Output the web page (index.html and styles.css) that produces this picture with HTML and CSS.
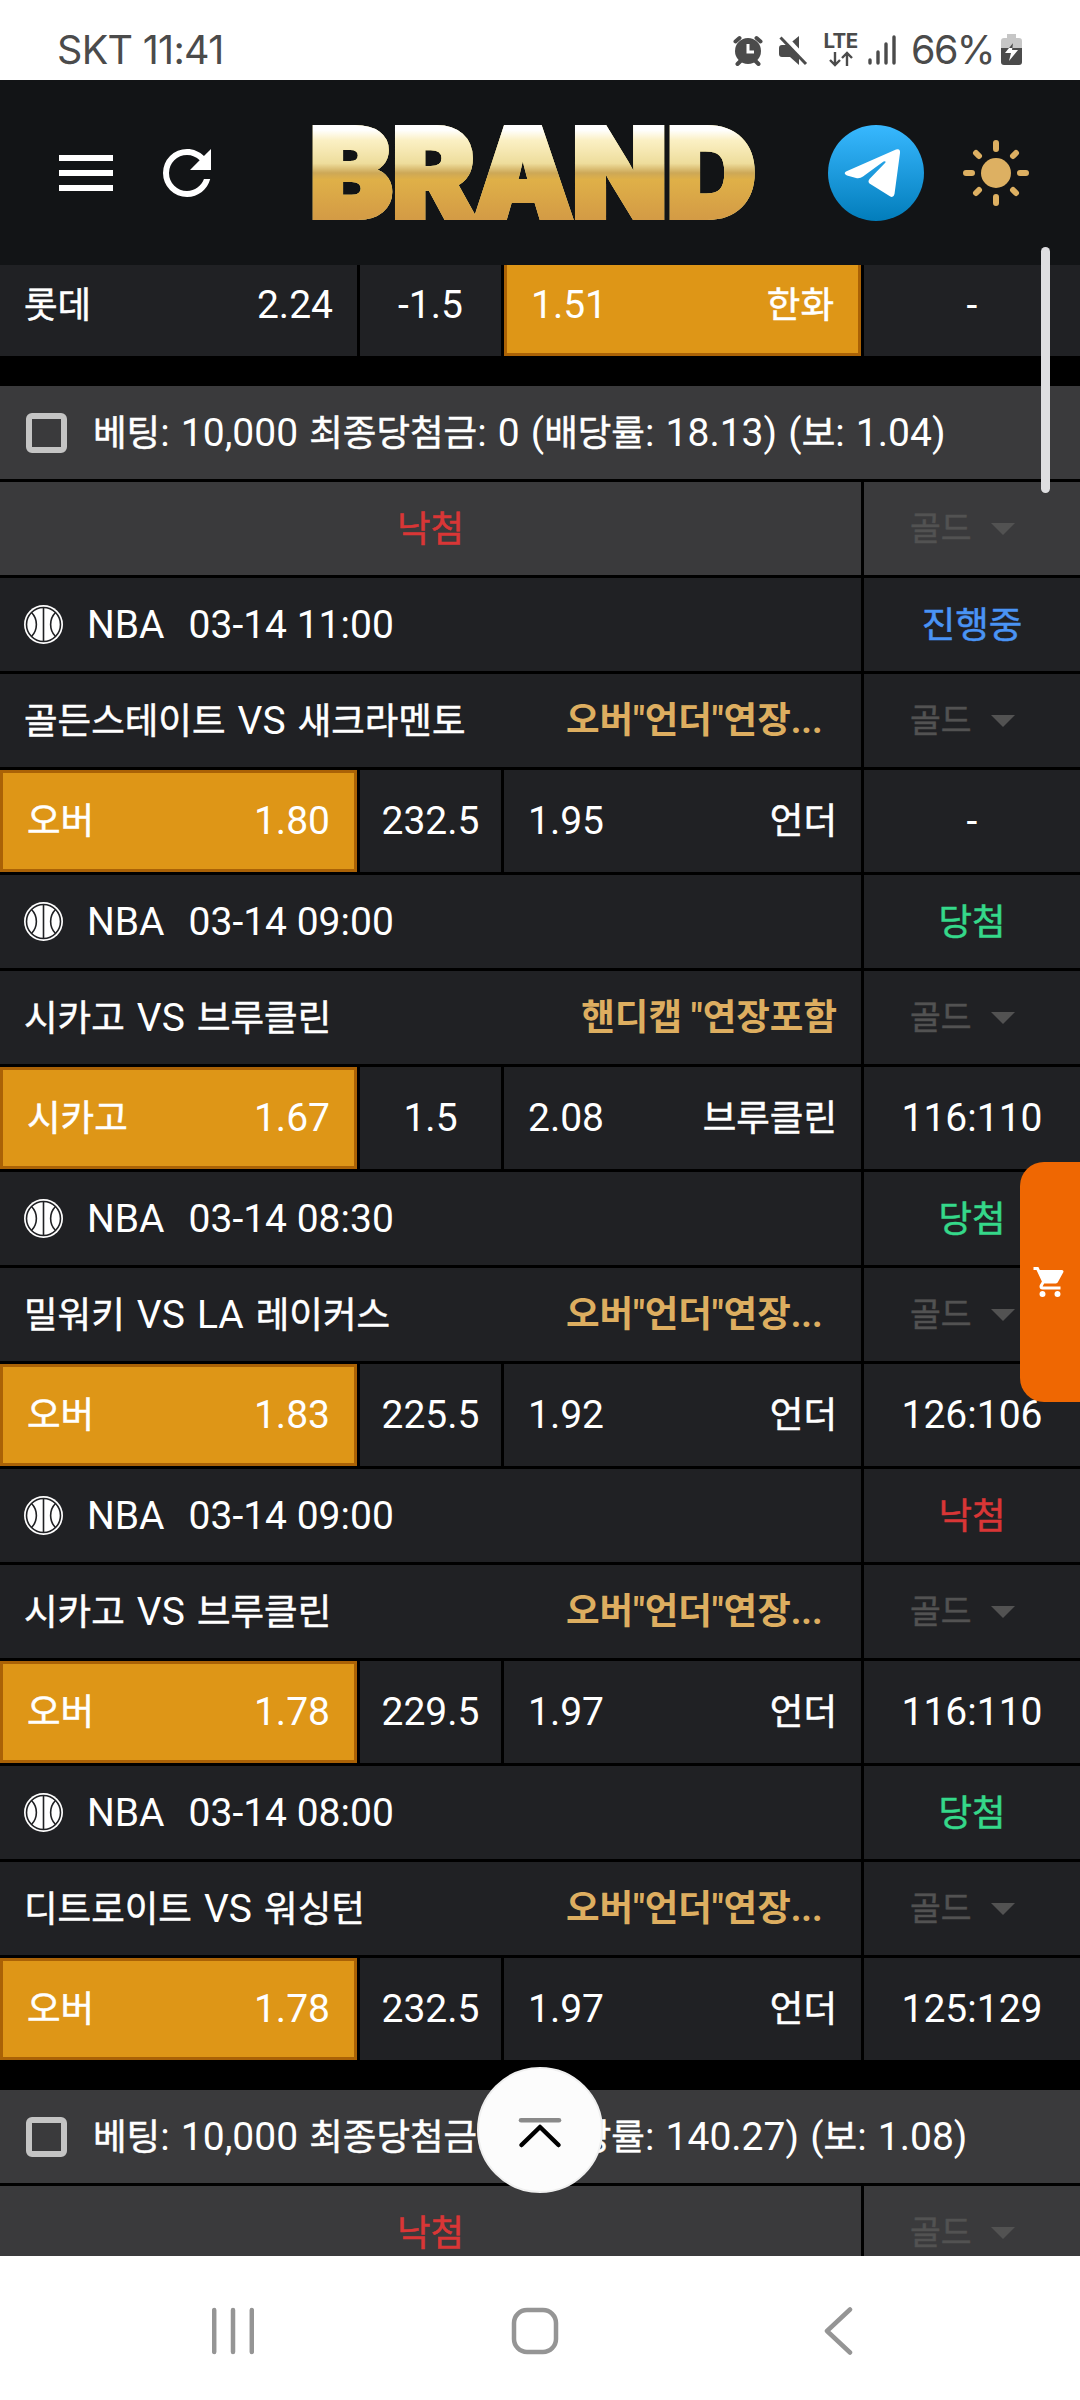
FILE: index.html
```
<!DOCTYPE html>
<html lang="ko">
<head>
<meta charset="utf-8">
<title>Bets</title>
<link rel="stylesheet" href="styles.css">
</head>
<body>
<svg width="0" height="0" class="defs">
  <symbol id="ball" viewBox="0 0 39 39">
    <circle cx="19.5" cy="19.5" r="19.5" fill="#fff"/>
    <g fill="none" stroke="#202124" stroke-width="1.6">
      <circle cx="19.5" cy="19.5" r="17"/>
      <path d="M19.5 2.5V36.5M7.5 7.5C14 14 14 25 7.5 31.5M31.5 7.5C25 14 25 25 31.5 31.5"/>
    </g>
  </symbol>
</svg>
<div class="phone">
  <div class="status">
    <span>SKT 11:41</span>
    <div class="status-icons">
      <svg class="alarm" width="30" height="32" viewBox="0 0 30 32" fill="#4b4b4b">
        <circle cx="15" cy="17" r="13"/>
        <path d="M2.5 7.500 6.500 4M27.500 7.500 23.500 4M4.500 30 7.500 27M25.500 30 22.500 27" stroke="#4b4b4b" stroke-width="4" stroke-linecap="round"/>
        <path d="M15 10v8h6" fill="none" stroke="#fff" stroke-width="3"/>
      </svg>
      <svg class="mute" width="30" height="32" viewBox="0 0 30 32">
        <path d="M1 14q0-3 3-3h6L21 2v29l-9-8H4q-3 0-3-3z" fill="#4b4b4b"/>
        <path d="M4 0 30 28" stroke="#fff" stroke-width="5"/>
        <path d="M2.500 3.500 28 30" stroke="#4b4b4b" stroke-width="3"/>
      </svg>
      <div class="lte"><b>LTE</b>
        <svg width="24" height="16" viewBox="0 0 24 16" fill="none" stroke="#4b4b4b" stroke-width="2.400"><path d="M6 1v13M1 9l5 5 5-5M18 15V2M13 7l5-5 5 5"/></svg>
      </div>
      <svg class="signal" width="28" height="32" viewBox="0 0 28 32" stroke="#4b4b4b" stroke-width="3.400" stroke-linecap="round"><path d="M2 26v3M10 18v11M18 10v19M26 3v26"/></svg>
      <span class="percent">66%</span>
      <svg class="battery" width="21" height="32" viewBox="0 0 21 32">
        <path d="M6 0h9v4h3q3 0 3 3v8H0V7q0-3 3-3h3z" fill="#c6c6c6"/>
        <path d="M0 14h21v14q0 3-3 3H3q-3 0-3-3z" fill="#4b4b4b"/>
        <path d="M12 9 4 19h6l-2 8 9-11h-6z" fill="#fff"/>
        <path d="M12 9 8 14h3.500z" fill="#4b4b4b"/>
      </svg>
    </div>
  </div>
  <header class="header">
    <svg class="menu" width="72" height="72" viewBox="0 0 24 24" fill="#fff"><path d="M3 6h18v2H3zM3 11h18v2H3zM3 16h18v2H3z"/></svg>
    <svg class="refresh" width="72" height="72" viewBox="0 0 24 24" fill="#fff"><path d="M17.65,6.35C16.2,4.9 14.21,4 12,4A8,8 0 0,0 4,12A8,8 0 0,0 12,20C15.73,20 18.84,17.45 19.73,14H17.65C16.83,16.33 14.61,18 12,18A6,6 0 0,1 6,12A6,6 0 0,1 12,6C13.66,6 15.14,6.69 16.22,7.78L13,11H20V4L17.65,6.35Z"/></svg>
    <svg class="logo" width="480" height="184" viewBox="-20 -44 480 184">
      <defs><linearGradient id="gold" gradientUnits="userSpaceOnUse" x1="0" y1="0" x2="0" y2="96">
        <stop offset="0" stop-color="#fff"/><stop offset=".05" stop-color="#fff"/><stop offset=".16" stop-color="#fbf0c4"/><stop offset=".4" stop-color="#eedd9c"/><stop offset=".5" stop-color="#cda857"/><stop offset=".57" stop-color="#dfb048"/><stop offset="1" stop-color="#d39a45"/>
      </linearGradient></defs>
      <text class="logo-text" x="-3" y="92" textLength="446" lengthAdjust="spacingAndGlyphs" fill="url(#gold)" stroke="url(#gold)" stroke-width="6">BRAND</text>
    </svg>
    <svg class="telegram" width="96" height="96" viewBox="0 0 96 96">
      <defs><linearGradient id="sky" x1="0" y1="0" x2="0" y2="1"><stop offset="0" stop-color="#38b8ff"/><stop offset="1" stop-color="#027dbb"/></linearGradient></defs>
      <circle cx="48" cy="48" r="48" fill="url(#sky)"/>
      <path fill="#fff" d="M18 46.500 68 24.500Q72.500 23 72 28L66.500 69Q65.500 73.500 61.500 71L41.500 58.500Q39.500 56.500 41.500 54L57.500 37.500Q58 35.500 55.500 36.500L35 51.500Q32 53.800 28 53L19 50.500Q15 48.500 18 46.500Z"/>
    </svg>
    <svg class="sun" width="66" height="66" viewBox="-33 -33 66 66"><circle r="15" fill="#ddb062"/><path d="M0-30v6M0 30v-6M-30 0h6M30 0h-6M-20-20l3 3M20-20l-3 3M-20 20l3-3M20 20l-3-3" stroke="#ddb062" stroke-width="6" stroke-linecap="round"/></svg>
  </header>
  <main class="content">
    <div class="row odds first"><div class="cell pair"><span class="ko">롯데</span><span>2.24</span></div><div class="cell mid">-1.5</div><div class="cell pair picked"><span>1.51</span><span class="ko">한화</span></div><div class="cell mid">-</div></div>

    <section class="slip">
      <div class="bet-head"><i class="check"></i><p><span class="ko">베팅</span>: 10,000 <span class="ko">최종당첨금</span>: 0 (<span class="ko">배당률</span>: 18.13) (<span class="ko">보</span>: 1.04)</p></div>
      <div class="row result"><div class="cell mid lose"><span class="ko">낙첨</span></div><div class="cell grade"><span>골드</span><i></i></div></div>

      <div class="row"><div class="cell league"><svg><use href="#ball"/></svg><span>NBA</span><span>03-14 11:00</span></div><div class="cell mid live"><span class="ko">진행중</span></div></div>
      <div class="row"><div class="cell match"><span class="teams"><span class="ko">골든스테이트</span> VS <span class="ko">새크라멘토</span></span><span class="market cut">오버"언더"연장...</span></div><div class="cell grade"><span>골드</span><i></i></div></div>
      <div class="row odds"><div class="cell pair picked"><span class="ko">오버</span><span>1.80</span></div><div class="cell mid">232.5</div><div class="cell pair"><span>1.95</span><span class="ko">언더</span></div><div class="cell mid">-</div></div>

      <div class="row"><div class="cell league"><svg><use href="#ball"/></svg><span>NBA</span><span>03-14 09:00</span></div><div class="cell mid win"><span class="ko">당첨</span></div></div>
      <div class="row"><div class="cell match"><span class="teams"><span class="ko">시카고</span> VS <span class="ko">브루클린</span></span><span class="market">핸디캡 "연장포함</span></div><div class="cell grade"><span>골드</span><i></i></div></div>
      <div class="row odds"><div class="cell pair picked"><span class="ko">시카고</span><span>1.67</span></div><div class="cell mid">1.5</div><div class="cell pair"><span>2.08</span><span class="ko">브루클린</span></div><div class="cell mid">116:110</div></div>

      <div class="row"><div class="cell league"><svg><use href="#ball"/></svg><span>NBA</span><span>03-14 08:30</span></div><div class="cell mid win"><span class="ko">당첨</span></div></div>
      <div class="row"><div class="cell match"><span class="teams"><span class="ko">밀워키</span> VS LA <span class="ko">레이커스</span></span><span class="market cut">오버"언더"연장...</span></div><div class="cell grade"><span>골드</span><i></i></div></div>
      <div class="row odds"><div class="cell pair picked"><span class="ko">오버</span><span>1.83</span></div><div class="cell mid">225.5</div><div class="cell pair"><span>1.92</span><span class="ko">언더</span></div><div class="cell mid">126:106</div></div>

      <div class="row"><div class="cell league"><svg><use href="#ball"/></svg><span>NBA</span><span>03-14 09:00</span></div><div class="cell mid lose"><span class="ko">낙첨</span></div></div>
      <div class="row"><div class="cell match"><span class="teams"><span class="ko">시카고</span> VS <span class="ko">브루클린</span></span><span class="market cut">오버"언더"연장...</span></div><div class="cell grade"><span>골드</span><i></i></div></div>
      <div class="row odds"><div class="cell pair picked"><span class="ko">오버</span><span>1.78</span></div><div class="cell mid">229.5</div><div class="cell pair"><span>1.97</span><span class="ko">언더</span></div><div class="cell mid">116:110</div></div>

      <div class="row"><div class="cell league"><svg><use href="#ball"/></svg><span>NBA</span><span>03-14 08:00</span></div><div class="cell mid win"><span class="ko">당첨</span></div></div>
      <div class="row"><div class="cell match"><span class="teams"><span class="ko">디트로이트</span> VS <span class="ko">워싱턴</span></span><span class="market cut">오버"언더"연장...</span></div><div class="cell grade"><span>골드</span><i></i></div></div>
      <div class="row odds"><div class="cell pair picked"><span class="ko">오버</span><span>1.78</span></div><div class="cell mid">232.5</div><div class="cell pair"><span>1.97</span><span class="ko">언더</span></div><div class="cell mid">125:129</div></div>
    </section>

    <section class="slip">
      <div class="bet-head"><i class="check"></i><p><span class="ko">베팅</span>: 10,000 <span class="ko">최종당첨금</span>: 0 (<span class="ko">배당률</span>: 140.27) (<span class="ko">보</span>: 1.08)</p></div>
      <div class="row result"><div class="cell mid lose"><span class="ko">낙첨</span></div><div class="cell grade"><span>골드</span><i></i></div></div>
    </section>
  </main>
  <nav class="nav">
    <svg width="42" height="48" viewBox="0 0 42 48"><path d="M2.200 3v42M21 3v42M39.800 3v42"/></svg>
    <svg width="48" height="48" viewBox="0 0 48 48"><rect x="3" y="3" width="42" height="42" rx="13"/></svg>
    <svg width="30" height="48" viewBox="0 0 30 48"><path d="M27 2.500 4 24 27 45.500"/></svg>
  </nav>
  <div class="scrollbar"></div>
  <div class="cart"><svg width="36" height="36" viewBox="0 0 24 24" fill="#fff"><path d="M17,18C15.89,18 15,18.89 15,20A2,2 0 0,0 17,22A2,2 0 0,0 19,20C19,18.89 18.1,18 17,18M1,2V4H3L6.6,11.59L5.24,14.04C5.09,14.32 5,14.65 5,15A2,2 0 0,0 7,17H19V15H7.42A0.25,0.25 0 0,1 7.17,14.75C7.17,14.7 7.18,14.66 7.2,14.63L8.1,13H15.55C16.3,13 16.96,12.58 17.3,11.97L20.88,5.5C20.95,5.34 21,5.17 21,5A1,1 0 0,0 20,4H5.21L4.27,2M7,18C5.89,18 5,18.89 5,20A2,2 0 0,0 7,22A2,2 0 0,0 9,20C9,18.89 8.1,18 7,18Z"/></svg></div>
  <div class="to-top"><svg width="48" height="36" viewBox="0 0 48 36" fill="none" stroke-linecap="round"><path d="M5 4.300h38" stroke="#8a8a8a" stroke-width="4.500"/><path d="M5.500 29 24 11 42.500 29" stroke="#000" stroke-width="4.500" stroke-linejoin="round"/></svg></div>
</div>
</body>
</html>
```

FILE: styles.css
```
* { box-sizing: border-box; }
body { margin: 0; background: #fff; }
p { margin: 0; }
svg { display: block; flex: none; }
.defs { position: absolute; }

.phone {
  position: relative;
  width: 1080px;
  height: 2400px;
  overflow: hidden;
  display: flex;
  flex-direction: column;
  font: 400 39px/48px Roboto, "Noto Sans CJK KR", sans-serif;
  color: #fff;
}
.ko { font-size: 36.5px; line-height: 0; padding-top: 2px; -webkit-text-stroke: .5px currentColor; }

/* status bar */
.status {
  flex: none;
  height: 80px;
  padding: 19px 58px 0 57px;
  display: flex;
  justify-content: space-between;
  align-items: flex-start;
  font: 400 39.5px/62px Inter, sans-serif;
  letter-spacing: -.7px;
  color: #4b4b4b;
}
.status-icons { display: flex; align-items: flex-start; }
.status-icons > svg { margin-top: 15px; }
.mute { margin-left: 15px; }
.lte { width: 33px; margin: 14px 0 0 16px; display: flex; flex-direction: column; align-items: center; gap: 2px; }
.lte b { font: 700 20.5px/16px Inter, sans-serif; letter-spacing: -.6px; }
.signal { margin-left: 11px; }
.percent { width: 86px; margin-left: 15px; letter-spacing: -1.6px; }
.battery { margin-left: 4px; }

/* header */
.header {
  flex: none;
  height: 185px;
  background: #121416;
  display: flex;
  align-items: center;
  padding-left: 50px;
  position: relative;
  z-index: 1;
}
.refresh { margin-left: 29px; }
.logo { margin-left: 70px; }
.logo-text { font: 900 122px Inter, sans-serif; filter: drop-shadow(0 0 .7px #f6e58e); }
.telegram { margin-left: 55px; }
.sun { margin-left: 39px; }

/* bet list */
.content { flex: none; height: 1991px; overflow: hidden; background: #000; }
.slip { margin-top: 30px; display: flex; flex-direction: column; gap: 3px; }
.bet-head { height: 93px; background: #3a3a3c; display: flex; align-items: center; padding-left: 26px; }
.bet-head p { margin-left: 26px; white-space: pre; word-spacing: 1.5px; }
.teams { word-spacing: 2.4px; }
.check { width: 41px; height: 40px; border: 6px solid #c4c4c4; border-radius: 6px; }
.row { display: grid; grid-template-columns: 861px 216px; gap: 3px; height: 93px; }
.row.odds { grid-template-columns: 357px 141px 357px 216px; height: 102px; }
.row.first { margin-top: -11px; }
.cell { background: #202124; display: flex; align-items: center; min-width: 0; white-space: pre; }
.result .cell { background: #3a3a3c; }
.mid { justify-content: center; }
.pair, .match { justify-content: space-between; padding: 0 24px; }
.picked { background: #de9617; border: 3px solid #aa6206; }
.league { padding-left: 24px; }
.league svg { width: 39px; height: 39px; }
.league span { margin-left: 24px; }
.market { color: #ddae60; font-weight: 700; font-size: 36.5px; padding-top: 1px; }
.market.cut { width: 271px; }
.grade { padding-left: 46px; color: #525252; font-size: 33.5px; }
.grade span { -webkit-text-stroke: .5px currentColor; }
.grade i { margin: 1px 0 0 19px; border: 12.5px solid transparent; border-top-color: #525252; border-bottom: 0; }
.live { color: #4a94f5; }
.win { color: #35d88a; }
.lose { color: #d93636; }

/* system navigation */
.nav { flex: 1; background: #fff; display: flex; align-items: center; padding: 6px 0 0 212px; }
.nav svg { fill: none; stroke: #959595; stroke-width: 4.5px; stroke-linecap: round; stroke-linejoin: round; }
.nav svg:nth-child(2) { margin-left: 257px; }
.nav svg:nth-child(3) { margin-left: 264px; }

/* floating controls */
.scrollbar { position: absolute; z-index: 2; left: 1041px; top: 247px; width: 9px; height: 246px; border-radius: 5px; background: #dedee0; }
.cart {
  position: absolute; right: 0; top: 1162px; width: 60px; height: 240px;
  border-radius: 24px 0 0 24px; background: #ef6702;
  display: flex; align-items: center; justify-content: center;
}
.to-top {
  position: absolute; left: 477px; top: 2067px; width: 126px; height: 126px;
  border-radius: 50%; background: #fcfcfc; border: 2px solid #f0f0f0;
  display: flex; align-items: center; justify-content: center; padding-top: 7px;
}
```
